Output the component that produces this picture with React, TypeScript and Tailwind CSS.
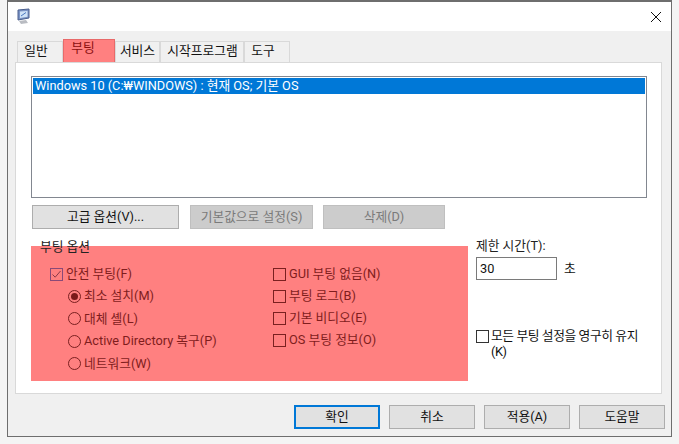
function Check({ label, checked }: { label: string; checked?: boolean }) {
  return (
    <div className="flex items-center h-[22px]">
      <div className={"w-[13px] h-[13px] border flex-none flex items-center justify-center " + (checked ? "border-[#8a4a78]" : "border-[#7a2020]")}>
        {checked && (
          <svg width="11" height="11" viewBox="0 0 11 11" fill="none">
            <path d="M1.5 5.5L4.2 8.2L9.5 2" stroke="#8a3a4a" strokeWidth="1" />
          </svg>
        )}
      </div>
      <span className="ml-[3px] text-[#7f1d1d]">{label}</span>
    </div>
  );
}

function Radio({ label, checked }: { label: string; checked?: boolean }) {
  return (
    <div className="flex items-center h-[22.5px] pl-[18px]">
      <div className="w-[13px] h-[13px] rounded-full border border-[#7a2020] flex-none flex items-center justify-center">
        {checked && <div className="w-[7px] h-[7px] rounded-full bg-[#7a1a1a]" />}
      </div>
      <span className="ml-[3px] text-[#7f1d1d]">{label}</span>
    </div>
  );
}

function Tab({ label, w, active }: { label: string; w: string; active?: boolean }) {
  return (
    <div
      className={
        "border border-b-0 flex items-center justify-center " +
        w +
        (active
          ? " border-[#e86a6a] bg-[#ff8080] text-[#8b0f0f] h-[23px] pb-[6px] pr-[12px]"
          : " mt-[2px] h-[21px] pb-[3px] border-[#d9d9d9] bg-[#f0f0f0] text-[#111]")
      }
    >
      {label}
    </div>
  );
}

function Btn({ label, w, disabled, focus }: { label: string; w: string; disabled?: boolean; focus?: boolean }) {
  return (
    <div
      className={
        "h-[24px] flex items-center justify-center pb-[1px] " +
        w +
        (disabled
          ? " bg-[#cccccc] border border-[#bfbfbf] text-[#7a7a7a]"
          : focus
            ? " bg-[#e1e1e1] border-2 border-[#0078d7] text-[#111]"
            : " bg-[#e1e1e1] border border-[#adadad] text-[#111]")
      }
    >
      {label}
    </div>
  );
}

export default function App() {
  return (
    <div className="w-[679px] h-[444px] bg-[#f4f4f4] pl-[7px] overflow-hidden text-[12.75px] leading-[16px] font-['Roboto','Noto_Sans_CJK_KR',sans-serif]">
      <div className="w-[665px] h-[437px] border border-[#6e6e6e] border-t-2 bg-[#f0f0f0] flex flex-col">
        <div className="h-[29px] bg-white flex items-center justify-between flex-none pl-[7px] pr-[9px]">
          <svg width="16" height="17" viewBox="0 0 16 17" fill="none">
            <path d="M3 2L14 1L14 10L3 12Z" fill="#7a93c4" stroke="#4a5f8e" />
            <path d="M5 3.5L12.5 3L12.5 8.8L5 10Z" fill="#cfe2f7" />
            <path d="M6 8L11 4.5" stroke="#4a78c0" />
            <path d="M4 13L11 12L13 15L6 16Z" fill="#b9bcc2" />
          </svg>
          <svg width="12" height="12" viewBox="0 0 12 12" fill="none">
            <path d="M1 1L11 11M11 1L1 11" stroke="#111" strokeWidth="1" />
          </svg>
        </div>
        <div className="flex pl-[9px] pt-[8px] flex-none">
          <Tab label="일반" w="w-[46px] pr-[8px]" />
          <Tab label="부팅" w="w-[52px]" active />
          <Tab label="서비스" w="w-[45px]" />
          <Tab label="시작프로그램" w="w-[84px] pl-[1px]" />
          <Tab label="도구" w="w-[46px] pr-[8px]" />
        </div>
        <div className="ml-[7px] w-[647px] h-[332px] bg-white border border-[#d9d9d9] flex-none pl-[15px] pt-[13px]">
          <div className="w-[616px] h-[122px] border border-[#828790] p-[1px]">
            <div className="h-[16px] bg-[#0078d7] text-white pl-[2px] flex items-center">Windows 10 (C:₩WINDOWS) : 현재 OS; 기본 OS</div>
          </div>
          <div className="flex mt-[7px] ml-[1px]">
            <Btn label="고급 옵션(V)..." w="w-[147px]" />
            <Btn label="기본값으로 설정(S)" w="w-[123px] ml-[11px]" disabled />
            <Btn label="삭제(D)" w="w-[122px] ml-[10px]" disabled />
          </div>
          <div className="flex mt-[17px]">
            <div className="w-[437px] h-[135px] bg-[#ff8080] relative pt-[17px] pl-[19px] flex-none flex">
              <span className="absolute left-[9px] -top-[7px] text-[#222]">부팅 옵션</span>
              <div className="w-[223px]">
                <Check label="안전 부팅(F)" checked />
                <Radio label="최소 설치(M)" checked />
                <Radio label="대체 셸(L)" />
                <Radio label="Active Directory 복구(P)" />
                <Radio label="네트워크(W)" />
              </div>
              <div>
                <Check label="GUI 부팅 없음(N)" />
                <Check label="부팅 로그(B)" />
                <Check label="기본 비디오(E)" />
                <Check label="OS 부팅 정보(O)" />
              </div>
            </div>
            <div className="ml-[8px] -mt-[8px] flex flex-col w-[172px]">
              <span className="text-[#222]">제한 시간(T):</span>
              <div className="flex items-center mt-[3px]">
                <div className="w-[81px] h-[23px] border border-[#7a7a7a] bg-white pl-[3px] flex items-center text-[#111]">30</div>
                <span className="ml-[7px] text-[#111]">초</span>
              </div>
              <div className="flex mt-[48px] text-[#111]">
                <div className="w-[13px] h-[13px] border border-[#333] flex-none mt-[2px]" />
                <span className="ml-[2px] leading-[16px] whitespace-nowrap tracking-[-0.4px]">
                  모든 부팅 설정을 영구히 유지
                  <br />
                  (K)
                </span>
              </div>
            </div>
          </div>
        </div>
        <div className="flex pl-[286px] pt-[11px] gap-[9px]">
          <Btn label="확인" w="w-[86px]" focus />
          <Btn label="취소" w="w-[86px]" />
          <Btn label="적용(A)" w="w-[86px]" />
          <Btn label="도움말" w="w-[86px]" />
        </div>
      </div>
    </div>
  );
}
